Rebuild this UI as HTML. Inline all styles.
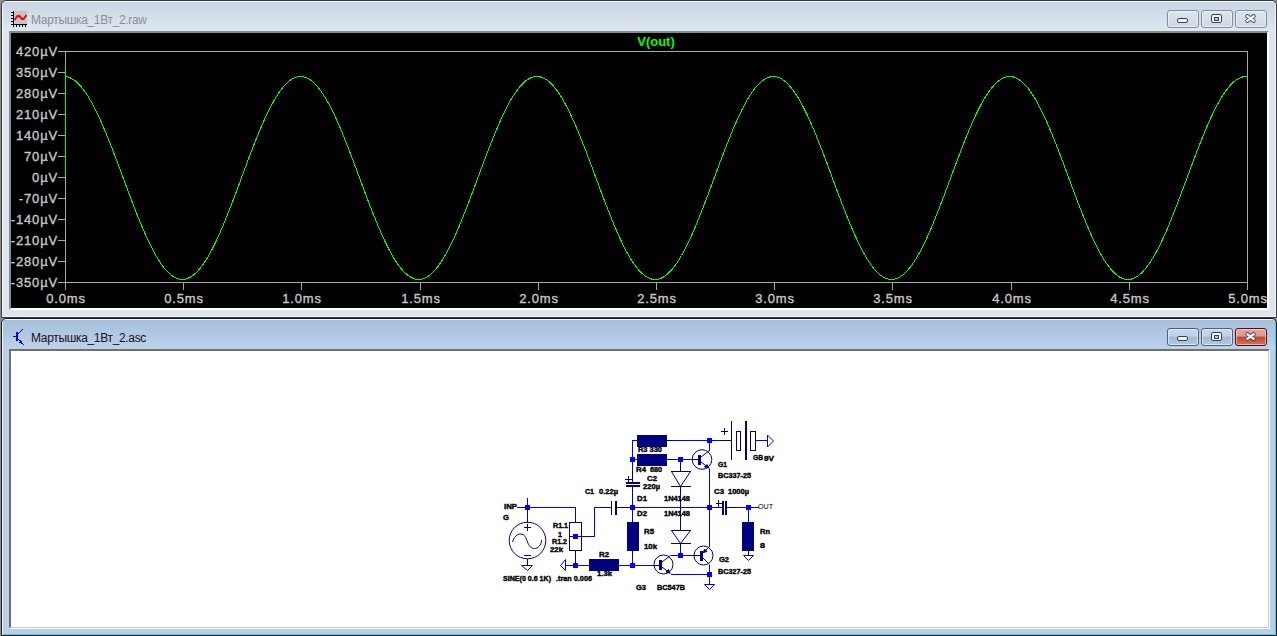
<!DOCTYPE html>
<html><head><meta charset="utf-8">
<style>
*{margin:0;padding:0;box-sizing:border-box}
html,body{width:1277px;height:636px;overflow:hidden;background:#8e8e8e;font-family:"Liberation Sans",sans-serif}
.abs{position:absolute}
#w1{position:absolute;left:1px;top:0;width:1276px;height:318px;background:#dde6f0;border:1px solid #363636;border-radius:5px 5px 0 0;box-shadow:inset 1px 1px 0 #f4f7fb, inset -1px -1px 0 #f4f7fb}
#w1 .tb{position:absolute;left:1px;top:1px;right:1px;height:30px;background:linear-gradient(#c8d5e3,#dfe8f2)}
#w2{position:absolute;left:1px;top:318px;width:1276px;height:318px;background:#b9d0e8;border:1px solid #1e1e1e;border-radius:5px 5px 0 0;box-shadow:inset 1px 1px 0 #f0f4fa, inset -1px -1px 0 #3fd0f0}
#w2 .tb{position:absolute;left:1px;top:1px;right:1px;height:30px;background:linear-gradient(#a6bfdc,#bdd3ea)}
.title{position:absolute;left:31px;font-size:12px;letter-spacing:-0.33px;white-space:nowrap}
#plot{position:absolute;left:9px;top:31px;width:1260px;height:279px;background:#000;border-style:solid;border-width:2px;border-color:#8a8a8a #fff #fff #8a8a8a}
#sch{position:absolute;left:9px;top:349px;width:1260px;height:279px;background:#fff;border-style:solid;border-width:2px 1px 1px 2px;border-color:#707070 #c8c8c8 #c8c8c8 #707070;box-shadow:1px 1px 0 #fff}
.btn{position:absolute;width:32px;height:18px;border:1px solid #7f8ca2;border-radius:3px;background:linear-gradient(#d9e4f0 0%,#d3dfeb 50%,#cddae8 100%);box-shadow:inset 0 0 0 1px rgba(255,255,255,.5)}
.btn.act{border-color:#4d5f7a;background:linear-gradient(#c5d8ec 0%,#bcd1e7 45%,#a3b9d4 50%,#b3c9e2 100%)}
.btn.close.act{border-color:#4a0f1a;background:linear-gradient(#e9a899 0%,#e0958a 45%,#c4452d 50%,#d3735c 100%);box-shadow:inset 0 0 0 1px rgba(255,220,210,.6)}
.gmin{position:absolute;width:11px;height:5px;border:1px solid #3b3f52;border-radius:2px;background:#f4f4f4}
.grest{position:absolute;width:11px;height:9px;border:1px solid #3b3f52;border-radius:2px;background:#f4f4f4}
.grest div{position:absolute;left:2px;top:2px;width:5px;height:4px;border:1px solid #3b3f52;background:#b6c6d8}
.gx{position:absolute}
text.ax{font-family:"Liberation Sans",sans-serif;font-size:13px;fill:#c8c8c8;stroke:#c8c8c8;stroke-width:0.35px;letter-spacing:0.85px}
text.t{font-family:"Liberation Sans",sans-serif;font-size:7.5px;font-weight:bold;fill:#000;stroke:#000;stroke-width:0.4px}
text.tn{font-family:"Liberation Sans",sans-serif;font-size:7.5px;fill:#000}
text.vt{font-family:"Liberation Sans",sans-serif;font-size:13px;font-weight:bold;fill:#00ff00}
</style></head><body>
<div id="w1">
 <div class="tb"></div>
</div>
<div id="w2">
 <div class="tb"></div>
</div>
<div class="title" style="top:12.5px;color:#8e8e8e">Мартышка_1Вт_2.raw</div>
<div class="title" style="top:330.5px;color:#1a1020">Мартышка_1Вт_2.asc</div>
<svg class="abs" style="left:11px;top:11px" width="16" height="16" viewBox="0 0 16 16" shape-rendering="crispEdges">
 <rect x="0" y="0" width="2" height="16" fill="#dedede"/><rect x="0" y="14" width="16" height="2" fill="#dedede"/>
 <rect x="3" y="0" width="13" height="13" fill="#c4c4c4"/>
 <rect x="2" y="0" width="1" height="16" fill="#000"/>
 <rect x="0" y="13" width="16" height="1" fill="#000"/>
 <g fill="#000"><rect x="0" y="1" width="2" height="1"/><rect x="0" y="4" width="2" height="1"/><rect x="0" y="7" width="2" height="1"/><rect x="0" y="10" width="2" height="1"/>
 <rect x="2" y="14" width="1" height="2"/><rect x="5" y="14" width="1" height="2"/><rect x="8" y="14" width="1" height="2"/><rect x="11" y="14" width="1" height="2"/><rect x="14" y="14" width="1" height="2"/></g>
 <path d="M3.5,9 L6.5,5 L8.5,5 L11,8 L12.5,8 L15.5,4" fill="none" stroke="#f00" stroke-width="2" shape-rendering="auto"/>
</svg>
<svg class="abs" style="left:12px;top:328px" width="13" height="17" viewBox="0 0 13 17" shape-rendering="crispEdges">
 <g fill="#0000ff"><rect x="1" y="8" width="3" height="1"/><rect x="4" y="4" width="2" height="9"/>
 <rect x="6" y="5" width="1" height="1"/><rect x="7" y="4" width="1" height="1"/><rect x="8" y="3" width="1" height="1"/><rect x="9" y="2" width="1" height="1"/><rect x="10" y="1" width="1" height="1"/>
 <rect x="6" y="11" width="1" height="1"/><rect x="7" y="12" width="1" height="1"/><rect x="8" y="13" width="1" height="1"/><rect x="9" y="14" width="1" height="1"/><rect x="10" y="15" width="1" height="1"/><rect x="11" y="16" width="1" height="1"/>
 <rect x="7" y="14" width="3" height="1"/><rect x="8" y="13" width="2" height="1"/><rect x="9" y="15" width="1" height="1"/><rect x="8" y="12" width="1" height="1"/></g>
</svg>
<div class="btn" style="left:1167px;top:10px"></div>
<div class="btn" style="left:1201px;top:10px"></div>
<div class="btn" style="left:1235px;top:10px"></div>
<div class="gmin" style="left:1177px;top:18px"></div>
<div class="grest" style="left:1211px;top:14px"><div></div></div>
<svg class="gx" style="left:1244px;top:13px" width="13" height="11" viewBox="0 0 13 11"><path d="M3.3,3.2 L9.7,7.8 M9.7,3.2 L3.3,7.8" stroke="#3b3f52" stroke-width="4" stroke-linecap="round"/><path d="M3.3,3.2 L9.7,7.8 M9.7,3.2 L3.3,7.8" stroke="#f6f6f6" stroke-width="2.3" stroke-linecap="round"/></svg>
<div class="btn act" style="left:1167px;top:328px"></div>
<div class="btn act" style="left:1201px;top:328px"></div>
<div class="btn close act" style="left:1235px;top:328px"></div>
<div class="gmin" style="left:1177px;top:336px"></div>
<div class="grest" style="left:1211px;top:332px"><div></div></div>
<svg class="gx" style="left:1244px;top:331px" width="13" height="11" viewBox="0 0 13 11"><path d="M3.3,3.2 L9.7,7.8 M9.7,3.2 L3.3,7.8" stroke="#3b3f52" stroke-width="4" stroke-linecap="round"/><path d="M3.3,3.2 L9.7,7.8 M9.7,3.2 L3.3,7.8" stroke="#f6f6f6" stroke-width="2.3" stroke-linecap="round"/></svg>
<div id="plot"></div>
<svg class="abs" style="left:0;top:0" width="1277" height="318">
<rect x="65.5" y="51.5" width="1182" height="231" fill="none" stroke="#a8a8a8" stroke-width="1"/>
<line x1="58" y1="51.5" x2="65" y2="51.5" stroke="#a8a8a8"/>
<text x="58" y="56" text-anchor="end" class="ax">420µV</text>
<line x1="58" y1="72.5" x2="65" y2="72.5" stroke="#a8a8a8"/>
<text x="58" y="77" text-anchor="end" class="ax">350µV</text>
<line x1="58" y1="93.5" x2="65" y2="93.5" stroke="#a8a8a8"/>
<text x="58" y="98" text-anchor="end" class="ax">280µV</text>
<line x1="58" y1="114.5" x2="65" y2="114.5" stroke="#a8a8a8"/>
<text x="58" y="119" text-anchor="end" class="ax">210µV</text>
<line x1="58" y1="135.5" x2="65" y2="135.5" stroke="#a8a8a8"/>
<text x="58" y="140" text-anchor="end" class="ax">140µV</text>
<line x1="58" y1="156.5" x2="65" y2="156.5" stroke="#a8a8a8"/>
<text x="58" y="161" text-anchor="end" class="ax">70µV</text>
<line x1="58" y1="177.5" x2="65" y2="177.5" stroke="#a8a8a8"/>
<text x="58" y="182" text-anchor="end" class="ax">0µV</text>
<line x1="58" y1="198.5" x2="65" y2="198.5" stroke="#a8a8a8"/>
<text x="58" y="203" text-anchor="end" class="ax">-70µV</text>
<line x1="58" y1="219.5" x2="65" y2="219.5" stroke="#a8a8a8"/>
<text x="58" y="224" text-anchor="end" class="ax">-140µV</text>
<line x1="58" y1="240.5" x2="65" y2="240.5" stroke="#a8a8a8"/>
<text x="58" y="245" text-anchor="end" class="ax">-210µV</text>
<line x1="58" y1="261.5" x2="65" y2="261.5" stroke="#a8a8a8"/>
<text x="58" y="266" text-anchor="end" class="ax">-280µV</text>
<line x1="58" y1="282.5" x2="65" y2="282.5" stroke="#a8a8a8"/>
<text x="58" y="287" text-anchor="end" class="ax">-350µV</text>
<line x1="65.5" y1="283" x2="65.5" y2="290" stroke="#a8a8a8"/>
<text x="66" y="303" text-anchor="middle" class="ax">0.0ms</text>
<line x1="183.5" y1="283" x2="183.5" y2="290" stroke="#a8a8a8"/>
<text x="184" y="303" text-anchor="middle" class="ax">0.5ms</text>
<line x1="301.5" y1="283" x2="301.5" y2="290" stroke="#a8a8a8"/>
<text x="302" y="303" text-anchor="middle" class="ax">1.0ms</text>
<line x1="420.5" y1="283" x2="420.5" y2="290" stroke="#a8a8a8"/>
<text x="421" y="303" text-anchor="middle" class="ax">1.5ms</text>
<line x1="538.5" y1="283" x2="538.5" y2="290" stroke="#a8a8a8"/>
<text x="539" y="303" text-anchor="middle" class="ax">2.0ms</text>
<line x1="656.5" y1="283" x2="656.5" y2="290" stroke="#a8a8a8"/>
<text x="657" y="303" text-anchor="middle" class="ax">2.5ms</text>
<line x1="774.5" y1="283" x2="774.5" y2="290" stroke="#a8a8a8"/>
<text x="775" y="303" text-anchor="middle" class="ax">3.0ms</text>
<line x1="892.5" y1="283" x2="892.5" y2="290" stroke="#a8a8a8"/>
<text x="893" y="303" text-anchor="middle" class="ax">3.5ms</text>
<line x1="1011.5" y1="283" x2="1011.5" y2="290" stroke="#a8a8a8"/>
<text x="1012" y="303" text-anchor="middle" class="ax">4.0ms</text>
<line x1="1129.5" y1="283" x2="1129.5" y2="290" stroke="#a8a8a8"/>
<text x="1130" y="303" text-anchor="middle" class="ax">4.5ms</text>
<line x1="1247.5" y1="283" x2="1247.5" y2="290" stroke="#a8a8a8"/>
<text x="1248" y="303" text-anchor="middle" class="ax">5.0ms</text>
<path d="M65.5,65.0 L65.5,177.0 L65.5,76.5 L65.5,76.6 L67.5,76.9 L69.5,77.5 L71.5,78.5 L73.5,79.7 L75.5,81.1 L77.5,82.9 L79.5,84.9 L81.5,87.2 L83.5,89.7 L85.5,92.5 L87.5,95.5 L89.5,98.8 L91.5,102.2 L93.5,105.9 L95.5,109.8 L97.5,113.9 L99.5,118.2 L101.5,122.7 L103.5,127.3 L105.5,132.0 L107.5,136.9 L109.5,141.9 L111.5,146.9 L113.5,152.1 L115.5,157.4 L117.5,162.7 L119.5,168.0 L121.5,173.4 L123.5,178.8 L125.5,184.2 L127.5,189.6 L129.5,194.9 L131.5,200.2 L133.5,205.4 L135.5,210.6 L137.5,215.7 L139.5,220.6 L141.5,225.4 L143.5,230.1 L145.5,234.7 L147.5,239.1 L149.5,243.3 L151.5,247.3 L153.5,251.2 L155.5,254.8 L157.5,258.2 L159.5,261.4 L161.5,264.4 L163.5,267.1 L165.5,269.5 L167.5,271.7 L169.5,273.7 L171.5,275.3 L173.5,276.7 L175.5,277.8 L177.5,278.7 L179.5,279.2 L181.5,279.5 L183.5,279.4 L185.5,279.1 L187.5,278.5 L189.5,277.6 L191.5,276.5 L193.5,275.0 L195.5,273.3 L197.5,271.3 L199.5,269.1 L201.5,266.6 L203.5,263.8 L205.5,260.8 L207.5,257.6 L209.5,254.1 L211.5,250.4 L213.5,246.6 L215.5,242.5 L217.5,238.2 L219.5,233.8 L221.5,229.2 L223.5,224.5 L225.5,219.6 L227.5,214.7 L229.5,209.6 L231.5,204.4 L233.5,199.2 L235.5,193.9 L237.5,188.5 L239.5,183.1 L241.5,177.7 L243.5,172.3 L245.5,167.0 L247.5,161.6 L249.5,156.3 L251.5,151.1 L253.5,145.9 L255.5,140.8 L257.5,135.9 L259.5,131.0 L261.5,126.3 L263.5,121.7 L265.5,117.3 L267.5,113.1 L269.5,109.0 L271.5,105.2 L273.5,101.5 L275.5,98.1 L277.5,94.9 L279.5,91.9 L281.5,89.2 L283.5,86.7 L285.5,84.5 L287.5,82.5 L289.5,80.8 L291.5,79.4 L293.5,78.3 L295.5,77.4 L297.5,76.8 L299.5,76.5 L301.5,76.5 L303.5,76.8 L305.5,77.4 L307.5,78.3 L309.5,79.4 L311.5,80.8 L313.5,82.5 L315.5,84.5 L317.5,86.7 L319.5,89.2 L321.5,91.9 L323.5,94.9 L325.5,98.1 L327.5,101.5 L329.5,105.2 L331.5,109.0 L333.5,113.1 L335.5,117.3 L337.5,121.7 L339.5,126.3 L341.5,131.0 L343.5,135.9 L345.5,140.8 L347.5,145.9 L349.5,151.1 L351.5,156.3 L353.5,161.6 L355.5,167.0 L357.5,172.3 L359.5,177.7 L361.5,183.1 L363.5,188.5 L365.5,193.9 L367.5,199.2 L369.5,204.4 L371.5,209.6 L373.5,214.7 L375.5,219.6 L377.5,224.5 L379.5,229.2 L381.5,233.8 L383.5,238.2 L385.5,242.5 L387.5,246.6 L389.5,250.4 L391.5,254.1 L393.5,257.6 L395.5,260.8 L397.5,263.8 L399.5,266.6 L401.5,269.1 L403.5,271.3 L405.5,273.3 L407.5,275.0 L409.5,276.5 L411.5,277.6 L413.5,278.5 L415.5,279.1 L417.5,279.4 L419.5,279.5 L421.5,279.2 L423.5,278.7 L425.5,277.8 L427.5,276.7 L429.5,275.3 L431.5,273.7 L433.5,271.7 L435.5,269.5 L437.5,267.1 L439.5,264.4 L441.5,261.4 L443.5,258.2 L445.5,254.8 L447.5,251.2 L449.5,247.3 L451.5,243.3 L453.5,239.1 L455.5,234.7 L457.5,230.1 L459.5,225.4 L461.5,220.6 L463.5,215.7 L465.5,210.6 L467.5,205.4 L469.5,200.2 L471.5,194.9 L473.5,189.6 L475.5,184.2 L477.5,178.8 L479.5,173.4 L481.5,168.0 L483.5,162.7 L485.5,157.4 L487.5,152.1 L489.5,146.9 L491.5,141.9 L493.5,136.9 L495.5,132.0 L497.5,127.3 L499.5,122.7 L501.5,118.2 L503.5,113.9 L505.5,109.8 L507.5,105.9 L509.5,102.2 L511.5,98.8 L513.5,95.5 L515.5,92.5 L517.5,89.7 L519.5,87.2 L521.5,84.9 L523.5,82.9 L525.5,81.1 L527.5,79.7 L529.5,78.5 L531.5,77.5 L533.5,76.9 L535.5,76.6 L537.5,76.5 L539.5,76.7 L541.5,77.3 L543.5,78.1 L545.5,79.1 L547.5,80.5 L549.5,82.1 L551.5,84.0 L553.5,86.2 L555.5,88.7 L557.5,91.3 L559.5,94.3 L561.5,97.4 L563.5,100.8 L565.5,104.4 L567.5,108.3 L569.5,112.3 L571.5,116.5 L573.5,120.9 L575.5,125.4 L577.5,130.1 L579.5,134.9 L581.5,139.8 L583.5,144.9 L585.5,150.0 L587.5,155.3 L589.5,160.6 L591.5,165.9 L593.5,171.3 L595.5,176.7 L597.5,182.0 L599.5,187.4 L601.5,192.8 L603.5,198.1 L605.5,203.4 L607.5,208.5 L609.5,213.6 L611.5,218.6 L613.5,223.5 L615.5,228.3 L617.5,232.9 L619.5,237.4 L621.5,241.6 L623.5,245.8 L625.5,249.7 L627.5,253.4 L629.5,256.9 L631.5,260.2 L633.5,263.2 L635.5,266.0 L637.5,268.6 L639.5,270.9 L641.5,272.9 L643.5,274.7 L645.5,276.2 L647.5,277.4 L649.5,278.4 L651.5,279.0 L653.5,279.4 L655.5,279.5 L657.5,279.3 L659.5,278.8 L661.5,278.0 L663.5,277.0 L665.5,275.6 L667.5,274.0 L669.5,272.2 L671.5,270.0 L673.5,267.6 L675.5,264.9 L677.5,262.0 L679.5,258.9 L681.5,255.5 L683.5,251.9 L685.5,248.1 L687.5,244.1 L689.5,239.9 L691.5,235.6 L693.5,231.1 L695.5,226.4 L697.5,221.6 L699.5,216.7 L701.5,211.6 L703.5,206.5 L705.5,201.3 L707.5,196.0 L709.5,190.6 L711.5,185.3 L713.5,179.9 L715.5,174.5 L717.5,169.1 L719.5,163.7 L721.5,158.4 L723.5,153.2 L725.5,148.0 L727.5,142.9 L729.5,137.9 L731.5,133.0 L733.5,128.2 L735.5,123.6 L737.5,119.1 L739.5,114.8 L741.5,110.6 L743.5,106.7 L745.5,103.0 L747.5,99.4 L749.5,96.1 L751.5,93.1 L753.5,90.2 L755.5,87.6 L757.5,85.3 L759.5,83.3 L761.5,81.5 L763.5,79.9 L765.5,78.7 L767.5,77.7 L769.5,77.0 L771.5,76.6 L773.5,76.5 L775.5,76.7 L777.5,77.1 L779.5,77.9 L781.5,78.9 L783.5,80.2 L785.5,81.8 L787.5,83.6 L789.5,85.8 L791.5,88.1 L793.5,90.8 L795.5,93.7 L797.5,96.8 L799.5,100.1 L801.5,103.7 L803.5,107.5 L805.5,111.5 L807.5,115.6 L809.5,120.0 L811.5,124.5 L813.5,129.1 L815.5,133.9 L817.5,138.8 L819.5,143.9 L821.5,149.0 L823.5,154.2 L825.5,159.5 L827.5,164.8 L829.5,170.2 L831.5,175.6 L833.5,181.0 L835.5,186.4 L837.5,191.7 L839.5,197.0 L841.5,202.3 L843.5,207.5 L845.5,212.6 L847.5,217.7 L849.5,222.6 L851.5,227.3 L853.5,232.0 L855.5,236.5 L857.5,240.8 L859.5,244.9 L861.5,248.9 L863.5,252.7 L865.5,256.2 L867.5,259.5 L869.5,262.6 L871.5,265.5 L873.5,268.1 L875.5,270.5 L877.5,272.6 L879.5,274.4 L881.5,275.9 L883.5,277.2 L885.5,278.2 L887.5,278.9 L889.5,279.4 L891.5,279.5 L893.5,279.4 L895.5,278.9 L897.5,278.2 L899.5,277.2 L901.5,275.9 L903.5,274.4 L905.5,272.6 L907.5,270.5 L909.5,268.1 L911.5,265.5 L913.5,262.6 L915.5,259.5 L917.5,256.2 L919.5,252.7 L921.5,248.9 L923.5,244.9 L925.5,240.8 L927.5,236.5 L929.5,232.0 L931.5,227.3 L933.5,222.6 L935.5,217.7 L937.5,212.6 L939.5,207.5 L941.5,202.3 L943.5,197.0 L945.5,191.7 L947.5,186.4 L949.5,181.0 L951.5,175.6 L953.5,170.2 L955.5,164.8 L957.5,159.5 L959.5,154.2 L961.5,149.0 L963.5,143.9 L965.5,138.8 L967.5,133.9 L969.5,129.1 L971.5,124.5 L973.5,120.0 L975.5,115.6 L977.5,111.5 L979.5,107.5 L981.5,103.7 L983.5,100.1 L985.5,96.8 L987.5,93.7 L989.5,90.8 L991.5,88.1 L993.5,85.8 L995.5,83.6 L997.5,81.8 L999.5,80.2 L1001.5,78.9 L1003.5,77.9 L1005.5,77.1 L1007.5,76.7 L1009.5,76.5 L1011.5,76.6 L1013.5,77.0 L1015.5,77.7 L1017.5,78.7 L1019.5,79.9 L1021.5,81.5 L1023.5,83.3 L1025.5,85.3 L1027.5,87.6 L1029.5,90.2 L1031.5,93.1 L1033.5,96.1 L1035.5,99.4 L1037.5,103.0 L1039.5,106.7 L1041.5,110.6 L1043.5,114.8 L1045.5,119.1 L1047.5,123.6 L1049.5,128.2 L1051.5,133.0 L1053.5,137.9 L1055.5,142.9 L1057.5,148.0 L1059.5,153.2 L1061.5,158.4 L1063.5,163.7 L1065.5,169.1 L1067.5,174.5 L1069.5,179.9 L1071.5,185.3 L1073.5,190.6 L1075.5,196.0 L1077.5,201.3 L1079.5,206.5 L1081.5,211.6 L1083.5,216.7 L1085.5,221.6 L1087.5,226.4 L1089.5,231.1 L1091.5,235.6 L1093.5,239.9 L1095.5,244.1 L1097.5,248.1 L1099.5,251.9 L1101.5,255.5 L1103.5,258.9 L1105.5,262.0 L1107.5,264.9 L1109.5,267.6 L1111.5,270.0 L1113.5,272.2 L1115.5,274.0 L1117.5,275.6 L1119.5,277.0 L1121.5,278.0 L1123.5,278.8 L1125.5,279.3 L1127.5,279.5 L1129.5,279.4 L1131.5,279.0 L1133.5,278.4 L1135.5,277.4 L1137.5,276.2 L1139.5,274.7 L1141.5,272.9 L1143.5,270.9 L1145.5,268.6 L1147.5,266.0 L1149.5,263.2 L1151.5,260.2 L1153.5,256.9 L1155.5,253.4 L1157.5,249.7 L1159.5,245.8 L1161.5,241.6 L1163.5,237.4 L1165.5,232.9 L1167.5,228.3 L1169.5,223.5 L1171.5,218.6 L1173.5,213.6 L1175.5,208.5 L1177.5,203.4 L1179.5,198.1 L1181.5,192.8 L1183.5,187.4 L1185.5,182.0 L1187.5,176.7 L1189.5,171.3 L1191.5,165.9 L1193.5,160.6 L1195.5,155.3 L1197.5,150.0 L1199.5,144.9 L1201.5,139.8 L1203.5,134.9 L1205.5,130.1 L1207.5,125.4 L1209.5,120.9 L1211.5,116.5 L1213.5,112.3 L1215.5,108.3 L1217.5,104.4 L1219.5,100.8 L1221.5,97.4 L1223.5,94.3 L1225.5,91.3 L1227.5,88.7 L1229.5,86.2 L1231.5,84.0 L1233.5,82.1 L1235.5,80.5 L1237.5,79.1 L1239.5,78.1 L1241.5,77.3 L1243.5,76.7 L1245.5,76.5 L1247.5,76.6" fill="none" stroke="#00ff00" stroke-width="1" shape-rendering="crispEdges"/>
<text x="656" y="46" text-anchor="middle" class="vt">V(out)</text>
</svg>
<div id="sch"></div>
<svg class="abs" style="left:0;top:0" width="1277" height="636">
<g shape-rendering="crispEdges"><rect x="517" y="507" width="59" height="1" fill="#0000ff"/>
<rect x="527" y="498" width="1" height="21" fill="#0000ff"/>
<rect x="527" y="519" width="1" height="4" fill="#000080"/>
<rect x="575" y="507" width="1" height="12" fill="#0000ff"/>
<rect x="575" y="519" width="1" height="4" fill="#000080"/>
<rect x="570" y="536" width="5" height="1" fill="#000080"/>
<rect x="575" y="536" width="20" height="1" fill="#0000ff"/>
<rect x="594" y="507" width="1" height="30" fill="#0000ff"/>
<rect x="594" y="507" width="7" height="1" fill="#0000ff"/>
<rect x="601" y="507" width="11" height="1" fill="#000080"/>
<rect x="617" y="507" width="13" height="1" fill="#000080"/>
<rect x="630" y="507" width="79" height="1" fill="#0000ff"/>
<rect x="709" y="507" width="5" height="1" fill="#0000ff"/>
<rect x="714" y="507" width="9" height="1" fill="#000080"/>
<rect x="727" y="507" width="11" height="1" fill="#000080"/>
<rect x="738" y="507" width="21" height="1" fill="#0000ff"/>
<rect x="748" y="507" width="1" height="12" fill="#0000ff"/>
<rect x="748" y="519" width="1" height="4" fill="#000080"/>
<rect x="632" y="440" width="1" height="31" fill="#0000ff"/>
<rect x="632" y="471" width="1" height="12" fill="#000080"/>
<rect x="632" y="487" width="1" height="11" fill="#000080"/>
<rect x="632" y="498" width="1" height="21" fill="#0000ff"/>
<rect x="632" y="519" width="1" height="4" fill="#000080"/>
<rect x="632" y="551" width="1" height="5" fill="#000080"/>
<rect x="632" y="556" width="1" height="10" fill="#0000ff"/>
<rect x="632" y="440" width="5" height="1" fill="#0000ff"/>
<rect x="667" y="440" width="5" height="1" fill="#000080"/>
<rect x="672" y="440" width="49" height="1" fill="#0000ff"/>
<rect x="721" y="440" width="11" height="1" fill="#000080"/>
<rect x="632" y="459" width="5" height="1" fill="#0000ff"/>
<rect x="667" y="459" width="5" height="1" fill="#000080"/>
<rect x="672" y="459" width="20" height="1" fill="#0000ff"/>
<rect x="692" y="459" width="7" height="1" fill="#000080"/>
<rect x="680" y="459" width="1" height="4" fill="#0000ff"/>
<rect x="680" y="463" width="1" height="9" fill="#000080"/>
<rect x="680" y="486" width="1" height="12" fill="#000080"/>
<rect x="680" y="498" width="1" height="21" fill="#0000ff"/>
<rect x="680" y="519" width="1" height="12" fill="#000080"/>
<rect x="680" y="543" width="1" height="5" fill="#000080"/>
<rect x="680" y="548" width="1" height="8" fill="#0000ff"/>
<rect x="709" y="440" width="1" height="11" fill="#0000ff"/>
<rect x="709" y="469" width="1" height="78" fill="#0000ff"/>
<rect x="709" y="565" width="1" height="20" fill="#0000ff"/>
<rect x="671" y="555" width="21" height="1" fill="#0000ff"/>
<rect x="692" y="555" width="9" height="1" fill="#000080"/>
<rect x="566" y="565" width="24" height="1" fill="#0000ff"/>
<rect x="619" y="565" width="36" height="1" fill="#0000ff"/>
<rect x="655" y="565" width="5" height="1" fill="#000080"/>
<rect x="671" y="574" width="39" height="1" fill="#0000ff"/>
<rect x="756" y="440" width="12" height="1" fill="#0000ff"/>
<rect x="525" y="505" width="5" height="5" fill="#0000ff"/>
<rect x="573" y="534" width="5" height="5" fill="#0000ff"/>
<rect x="630" y="457" width="5" height="5" fill="#0000ff"/>
<rect x="707" y="438" width="5" height="5" fill="#0000ff"/>
<rect x="678" y="457" width="5" height="5" fill="#0000ff"/>
<rect x="630" y="505" width="5" height="5" fill="#0000ff"/>
<rect x="707" y="505" width="5" height="5" fill="#0000ff"/>
<rect x="746" y="505" width="5" height="5" fill="#0000ff"/>
<rect x="573" y="563" width="5" height="5" fill="#0000ff"/>
<rect x="630" y="563" width="5" height="5" fill="#0000ff"/>
<rect x="678" y="553" width="5" height="5" fill="#0000ff"/>
<rect x="707" y="572" width="5" height="5" fill="#0000ff"/>
<rect x="524" y="527" width="7" height="1" fill="#000080"/>
<rect x="527" y="524" width="1" height="7" fill="#000080"/>
<rect x="524" y="555" width="7" height="1" fill="#000080"/>
<rect x="527" y="559" width="1" height="7" fill="#000080"/>
<rect x="569" y="522" width="13" height="1" fill="#000080"/>
<rect x="569" y="550" width="13" height="1" fill="#000080"/>
<rect x="569" y="522" width="1" height="29" fill="#000080"/>
<rect x="581" y="522" width="1" height="29" fill="#000080"/>
<rect x="575" y="551" width="1" height="13" fill="#000080"/>
<rect x="589" y="559" width="30" height="12" fill="#000080"/>
<rect x="637" y="435" width="30" height="12" fill="#000080"/>
<rect x="637" y="454" width="30" height="12" fill="#000080"/>
<rect x="627" y="522" width="12" height="29" fill="#000080"/>
<rect x="742" y="522" width="12" height="29" fill="#000080"/>
<rect x="611" y="501" width="1" height="14" fill="#000080"/>
<rect x="615" y="501" width="2" height="14" fill="#000080"/>
<rect x="626" y="482" width="14" height="2" fill="#000080"/>
<rect x="626" y="485" width="14" height="2" fill="#000080"/>
<rect x="625" y="479" width="7" height="1" fill="#000080"/>
<rect x="628" y="476" width="1" height="7" fill="#000080"/>
<rect x="722" y="501" width="2" height="14" fill="#000080"/>
<rect x="725" y="501" width="2" height="14" fill="#000080"/>
<rect x="716" y="503" width="6" height="1" fill="#000080"/>
<rect x="718" y="500" width="1" height="7" fill="#000080"/>
<rect x="671" y="471" width="20" height="1" fill="#000080"/>
<rect x="671" y="486" width="20" height="1" fill="#000080"/>
<rect x="671" y="530" width="20" height="1" fill="#000080"/>
<rect x="671" y="543" width="20" height="1" fill="#000080"/>
<rect x="698" y="455" width="3" height="10" fill="#000080"/>
<rect x="692" y="459" width="6" height="1" fill="#000080"/>
<rect x="700" y="551" width="3" height="10" fill="#000080"/>
<rect x="659" y="560" width="3" height="10" fill="#000080"/>
<rect x="654" y="565" width="5" height="1" fill="#000080"/>
<rect x="731" y="421" width="1" height="39" fill="#000080"/>
<rect x="721" y="431" width="7" height="1" fill="#000080"/>
<rect x="724" y="428" width="1" height="7" fill="#000080"/>
<rect x="736" y="431" width="5" height="1" fill="#000080"/>
<rect x="736" y="450" width="5" height="1" fill="#000080"/>
<rect x="736" y="431" width="1" height="20" fill="#000080"/>
<rect x="740" y="431" width="1" height="20" fill="#000080"/>
<rect x="745" y="421" width="2" height="39" fill="#000080"/>
<rect x="750" y="431" width="6" height="1" fill="#000080"/>
<rect x="750" y="450" width="6" height="1" fill="#000080"/>
<rect x="750" y="431" width="1" height="20" fill="#000080"/>
<rect x="755" y="431" width="1" height="20" fill="#000080"/>
<rect x="748" y="551" width="1" height="5" fill="#000080"/></g>
<g><circle cx="527.5" cy="540.5" r="18.3" stroke="#000080" stroke-width="1" fill="none"/>
<path d="M512.5,542 C514,537 517,534 520.5,534 C525,534 526,538 527.5,542 C529,546 531,548.5 534.5,548.5 C538,548.5 541.5,545 541.5,540" stroke="#000080" stroke-width="1" fill="none"/>
<path d="M521.5,565.5 L532.5,565.5 L527.5,570.5 Z" stroke="#0000ff" stroke-width="1" fill="none"/>
<path d="M565.5,559.5 L565.5,570.5 L560.5,565.5 Z" stroke="#0000ff" stroke-width="1" fill="none"/>
<path d="M671.5,471.5 L680.5,486.5 L690.5,471.5" stroke="#000080" stroke-width="1" fill="none"/>
<path d="M671.5,530.5 L680.5,543.5 L690.5,530.5" stroke="#000080" stroke-width="1" fill="none"/>
<circle cx="702" cy="459.5" r="9.8" stroke="#000080" stroke-width="1" fill="none"/>
<path d="M701,457 L709.5,450.5" stroke="#000080" stroke-width="1" fill="none"/>
<path d="M701,462 L709.5,468.5" stroke="#000080" stroke-width="1" fill="none"/>
<path d="M708.5,468 L704.5,467 L707,464.5 Z" stroke="#000080" stroke-width="1" fill="#000080"/>
<circle cx="703.5" cy="555.5" r="9.5" stroke="#000080" stroke-width="1" fill="none"/>
<path d="M703,553 L709.5,546.5" stroke="#000080" stroke-width="1" fill="none"/>
<path d="M703,558 L709.5,564.5" stroke="#000080" stroke-width="1" fill="none"/>
<path d="M703.5,552.5 L704.5,549 L707,551.5 Z" stroke="#000080" stroke-width="1" fill="#000080"/>
<circle cx="663.5" cy="564.5" r="9.5" stroke="#000080" stroke-width="1" fill="none"/>
<path d="M662,562 L670.5,555.5" stroke="#000080" stroke-width="1" fill="none"/>
<path d="M662,567 L670.5,573.5" stroke="#000080" stroke-width="1" fill="none"/>
<path d="M670,573 L666,572 L668.5,569.5 Z" stroke="#000080" stroke-width="1" fill="#000080"/>
<path d="M767.5,435 L767.5,447 L773.5,441 Z" stroke="#0000ff" stroke-width="1" fill="none"/>
<path d="M743.5,555.5 L753.5,555.5 L748.5,560.5 Z" stroke="#0000ff" stroke-width="1" fill="none"/>
<path d="M704.5,584.5 L714.5,584.5 L709.5,589.5 Z" stroke="#0000ff" stroke-width="1" fill="none"/></g>
<text x="504" y="508.8" class="t" textLength="13" lengthAdjust="spacingAndGlyphs">INP</text>
<text x="503" y="520.3" class="t" textLength="6" lengthAdjust="spacingAndGlyphs">G</text>
<text x="553" y="527.8" class="t" textLength="15" lengthAdjust="spacingAndGlyphs">R1.1</text>
<text x="558" y="536.8" class="t" textLength="4" lengthAdjust="spacingAndGlyphs">1</text>
<text x="552" y="543.8" class="t" textLength="15" lengthAdjust="spacingAndGlyphs">R1.2</text>
<text x="550" y="551.8" class="t" textLength="13" lengthAdjust="spacingAndGlyphs">22k</text>
<text x="503" y="580.8" class="t" textLength="48" lengthAdjust="spacingAndGlyphs">SINE(0 0.6 1K)</text>
<text x="556" y="580.8" class="t" textLength="36" lengthAdjust="spacingAndGlyphs">.tran 0.006</text>
<text x="599" y="556.8" class="t" textLength="10" lengthAdjust="spacingAndGlyphs">R2</text>
<text x="597" y="575.8" class="t" textLength="15" lengthAdjust="spacingAndGlyphs">1.3k</text>
<text x="585" y="493.8" class="t" textLength="9" lengthAdjust="spacingAndGlyphs">C1</text>
<text x="599" y="493.8" class="t" textLength="19" lengthAdjust="spacingAndGlyphs">0.22µ</text>
<text x="638" y="451.8" class="t" textLength="24" lengthAdjust="spacingAndGlyphs">R3 330</text>
<text x="636" y="471.8" class="t" textLength="10" lengthAdjust="spacingAndGlyphs">R4</text>
<text x="650" y="471.8" class="t" textLength="12" lengthAdjust="spacingAndGlyphs">680</text>
<text x="647" y="480.8" class="t" textLength="10" lengthAdjust="spacingAndGlyphs">C2</text>
<text x="643" y="489.3" class="t" textLength="17" lengthAdjust="spacingAndGlyphs">220µ</text>
<text x="637" y="501.0" class="t" textLength="10" lengthAdjust="spacingAndGlyphs">D1</text>
<text x="637" y="516.0" class="t" textLength="10" lengthAdjust="spacingAndGlyphs">D2</text>
<text x="664" y="501.0" class="t" textLength="26" lengthAdjust="spacingAndGlyphs">1N4148</text>
<text x="664" y="516.0" class="t" textLength="26" lengthAdjust="spacingAndGlyphs">1N4148</text>
<text x="644" y="533.8" class="t" textLength="10" lengthAdjust="spacingAndGlyphs">R5</text>
<text x="644" y="548.8" class="t" textLength="13" lengthAdjust="spacingAndGlyphs">10k</text>
<text x="718" y="466.8" class="t" textLength="9" lengthAdjust="spacingAndGlyphs">G1</text>
<text x="718" y="478.3" class="t" textLength="33" lengthAdjust="spacingAndGlyphs">BC337-25</text>
<text x="753" y="459.8" class="t" textLength="10" lengthAdjust="spacingAndGlyphs">GB</text>
<text x="764" y="461.3" class="t" textLength="10" lengthAdjust="spacingAndGlyphs">9V</text>
<text x="714" y="494.3" class="t" textLength="10" lengthAdjust="spacingAndGlyphs">C3</text>
<text x="728" y="494.3" class="t" textLength="21" lengthAdjust="spacingAndGlyphs">1000µ</text>
<text x="719" y="561.8" class="t" textLength="10" lengthAdjust="spacingAndGlyphs">G2</text>
<text x="718" y="573.8" class="t" textLength="33" lengthAdjust="spacingAndGlyphs">BC327-25</text>
<text x="636" y="590.3" class="t" textLength="10" lengthAdjust="spacingAndGlyphs">G3</text>
<text x="657" y="589.8" class="t" textLength="28" lengthAdjust="spacingAndGlyphs">BC547B</text>
<text x="760" y="533.8" class="t" textLength="10" lengthAdjust="spacingAndGlyphs">Rn</text>
<text x="760" y="548.3" class="t" textLength="5" lengthAdjust="spacingAndGlyphs">8</text>
<text x="758" y="508.8" class="tn" textLength="15" lengthAdjust="spacingAndGlyphs">OUT</text>
</svg>
</body></html>
